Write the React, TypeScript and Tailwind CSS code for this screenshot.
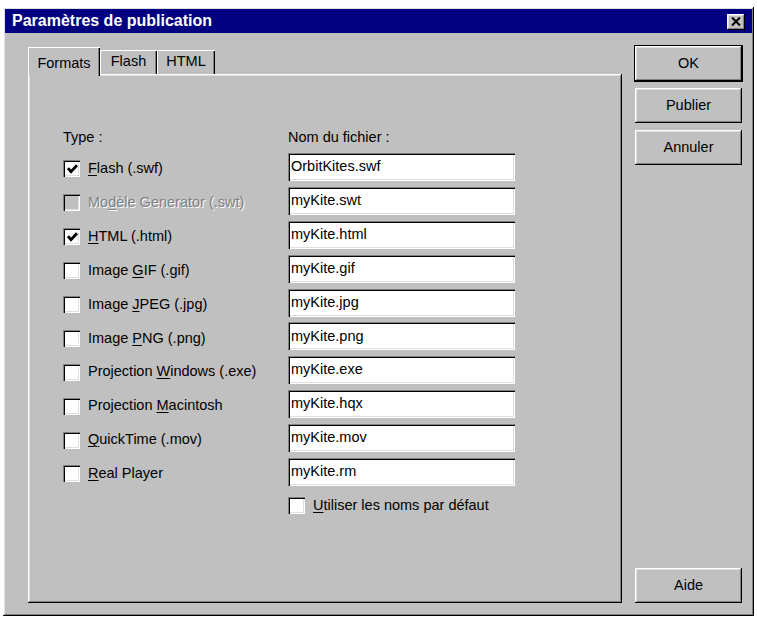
import React from "react";

const raised =
  "shadow-[inset_-1px_-1px_0_#000,inset_1px_1px_0_#fff,inset_-2px_-2px_0_#808080,inset_2px_2px_0_#dfdfdf]";
const sunken =
  "shadow-[inset_1px_1px_0_#808080,inset_2px_2px_0_#000,inset_-1px_-1px_0_#fff,inset_-2px_-2px_0_#dfdfdf]";

type Row = {
  label: [string, string, string];
  file: string;
  checked?: boolean;
  disabled?: boolean;
};

const rows: Row[] = [
  { label: ["", "F", "lash (.swf)"], file: "OrbitKites.swf", checked: true },
  { label: ["Mo", "d", "èle Generator (.swt)"], file: "myKite.swt", disabled: true },
  { label: ["", "H", "TML (.html)"], file: "myKite.html", checked: true },
  { label: ["Image ", "G", "IF (.gif)"], file: "myKite.gif" },
  { label: ["Image ", "J", "PEG (.jpg)"], file: "myKite.jpg" },
  { label: ["Image ", "P", "NG (.png)"], file: "myKite.png" },
  { label: ["Projection ", "W", "indows (.exe)"], file: "myKite.exe" },
  { label: ["Projection ", "M", "acintosh"], file: "myKite.hqx" },
  { label: ["", "Q", "uickTime (.mov)"], file: "myKite.mov" },
  { label: ["", "R", "eal Player"], file: "myKite.rm" },
];

function CheckBox({ checked, disabled }: { checked?: boolean; disabled?: boolean }) {
  return (
    <span
      className={`flex h-[17px] w-[17px] shrink-0 items-center justify-center ${sunken} ${
        disabled ? "bg-[#c0c0c0]" : "bg-white"
      }`}
    >
      {checked && (
        <svg width="11" height="10" viewBox="0 0 11 10" className="mt-[1px] ml-[1px]">
          <path d="M1 4.2 L4 7.6 L10 1.2" fill="none" stroke="#000" strokeWidth="2.8" />
        </svg>
      )}
    </span>
  );
}

function Label({ parts, disabled }: { parts: [string, string, string]; disabled?: boolean }) {
  return (
    <span
      className={`whitespace-nowrap ${
        disabled ? "text-[#808080] [text-shadow:1px_1px_0_#fff]" : "text-black"
      }`}
    >
      {parts[0]}
      <span className="underline underline-offset-[2px]">{parts[1]}</span>
      {parts[2]}
    </span>
  );
}

function Button({ children, isDefault }: { children: React.ReactNode; isDefault?: boolean }) {
  return (
    <div
      className={`flex h-[35px] w-[107px] items-center justify-center bg-[#c0c0c0] text-black ${
        isDefault ? "outline outline-1 outline-black" : ""
      } ${raised}`}
    >
      {children}
    </div>
  );
}

export default function App() {
  return (
    <div className="min-h-screen bg-white pl-[3px] pt-[7px] font-['Liberation_Sans',Arial,sans-serif] text-[14.5px]">
      <div className={`flex h-[609px] w-[751px] flex-col bg-[#c0c0c0] p-[2px] ${raised}`}>
        {/* title bar */}
        <div className="flex h-[24px] items-center justify-between bg-[#000080] pl-[7px] pr-[7px]">
          <span className="text-[16px] font-bold text-white">Paramètres de publication</span>
          <div className={`mt-[1px] flex h-[16px] w-[18px] items-center justify-center bg-[#c0c0c0] ${raised}`}>
            <svg width="10" height="9" viewBox="0 0 10 9">
              <path d="M1 0.5 L9 8.5 M9 0.5 L1 8.5" stroke="#000" strokeWidth="2" />
            </svg>
          </div>
        </div>

        {/* body */}
        <div className="flex flex-1 pl-[23px] pr-[7px] pt-[13px] pb-[11px]">
          <div className="mt-[1px] flex w-[594px] flex-col">
            {/* tabs */}
            <div className="flex h-[27px] items-end">
              <div className="relative z-10 -mb-[2px] flex h-[29px] w-[72px] items-start justify-center bg-[#c0c0c0] pt-[6px] shadow-[inset_1px_1px_0_#fff,inset_-1px_0_0_#000,inset_-2px_0_0_#808080]">
                Formats
              </div>
              <div className="flex h-[24px] w-[57px] items-center justify-center shadow-[inset_1px_1px_0_#fff,inset_-1px_0_0_#000,inset_-2px_0_0_#808080]">
                Flash
              </div>
              <div className="flex h-[24px] w-[58px] items-center justify-center shadow-[inset_1px_1px_0_#fff,inset_-1px_0_0_#000,inset_-2px_0_0_#808080]">
                HTML
              </div>
            </div>

            {/* panel */}
            <div className={`flex-1 pl-[35px] pt-[53px] ${raised}`}>
              <div className="flex h-[22px] items-center">
                <span className="w-[225px]">Type :</span>
                <span>Nom du fichier :</span>
              </div>
              <div className="mt-[1px] flex flex-col">
                {rows.map((r) => (
                  <div key={r.file} className="flex h-[33.9px] items-center">
                    <div className="flex w-[225px] items-center gap-[8px] pt-[4px]">
                      <CheckBox checked={r.checked} disabled={r.disabled} />
                      <Label parts={r.label} disabled={r.disabled} />
                    </div>
                    <div className={`flex h-[28px] w-[227px] items-center bg-white pl-[3px] ${sunken}`}>
                      {r.file}
                    </div>
                  </div>
                ))}
                <div className="flex h-[34px] items-center">
                  <div className="w-[225px]" />
                  <div className="flex items-center gap-[8px]">
                    <CheckBox />
                    <Label parts={["", "U", "tiliser les noms par défaut"]} />
                  </div>
                </div>
              </div>
            </div>
          </div>

          {/* buttons */}
          <div className="ml-[13px] flex flex-col">
            <div className="flex flex-col gap-[7px]">
              <Button isDefault>OK</Button>
              <Button>Publier</Button>
              <Button>Annuler</Button>
            </div>
            <div className="mt-auto">
              <Button>Aide</Button>
            </div>
          </div>
        </div>
      </div>
    </div>
  );
}
